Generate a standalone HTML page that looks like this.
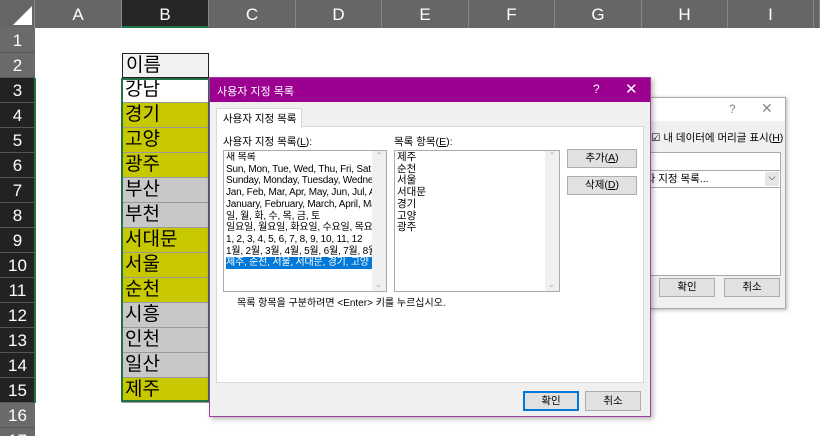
<!DOCTYPE html>
<html><head><meta charset="utf-8"><style>
*{margin:0;padding:0;box-sizing:border-box}
html,body{width:820px;height:436px;overflow:hidden}
body{background:#fff;position:relative;font-family:"Liberation Sans","Noto Sans CJK KR",sans-serif}
.a{position:absolute}
.ch{position:absolute;top:0;height:28px;background:#666;color:#fff;font-size:17px;text-align:center;line-height:30px;border-right:1px solid #888}
.rh{position:absolute;left:0;width:35px;height:25px;color:#fff;font-size:17px;text-align:center;line-height:25px;border-bottom:1px solid #555}
.c{position:absolute;left:122px;width:87px;height:25px;font-size:19px;line-height:24px;padding-left:3px;border-bottom:1px solid #9a9a9a;color:#000}
.y{background:#c8c800}.g{background:#c8c8c8}
.s{font-size:10.5px;color:#000;line-height:12.3px;white-space:nowrap}
.btn{position:absolute;background:#e1e1e1;border:1px solid #adadad;font-size:10.5px;text-align:center}
</style></head><body>
<div class="ch" style="left:0;width:35px;background:#666"></div>
<svg class="a" style="left:12px;top:6px" width="22" height="20"><polygon points="20,0 20,19 1,19" fill="#fff"/></svg>
<div class="ch" style="left:35px;width:87px">A</div>
<div class="ch" style="left:122px;width:87px;background:#262626;border-bottom:2px solid #217346">B</div>
<div class="ch" style="left:209px;width:87px">C</div>
<div class="ch" style="left:296px;width:86px">D</div>
<div class="ch" style="left:382px;width:87px">E</div>
<div class="ch" style="left:469px;width:86px">F</div>
<div class="ch" style="left:555px;width:87px">G</div>
<div class="ch" style="left:642px;width:86px">H</div>
<div class="ch" style="left:728px;width:86px">I</div>
<div class="ch" style="left:814px;width:6px"></div>
<div class="rh" style="top:28px;background:#6a6a6a">1</div>
<div class="rh" style="top:53px;background:#6a6a6a">2</div>
<div class="rh" style="top:78px;background:#222">3</div>
<div class="rh" style="top:103px;background:#222">4</div>
<div class="rh" style="top:128px;background:#222">5</div>
<div class="rh" style="top:153px;background:#222">6</div>
<div class="rh" style="top:178px;background:#222">7</div>
<div class="rh" style="top:203px;background:#222">8</div>
<div class="rh" style="top:228px;background:#222">9</div>
<div class="rh" style="top:253px;background:#222">10</div>
<div class="rh" style="top:278px;background:#222">11</div>
<div class="rh" style="top:303px;background:#222">12</div>
<div class="rh" style="top:328px;background:#222">13</div>
<div class="rh" style="top:353px;background:#222">14</div>
<div class="rh" style="top:378px;background:#222">15</div>
<div class="rh" style="top:403px;background:#6a6a6a">16</div>
<div class="rh" style="top:428px;background:#6a6a6a">17</div>
<div class="a" style="left:34px;top:78px;width:2px;height:325px;background:#217346"></div>
<div class="c" style="top:53px;background:#f2f2f2;border:1px solid #222">이름</div>
<div class="c" style="top:78px;background:#fff">강남</div>
<div class="c y" style="top:103px">경기</div>
<div class="c y" style="top:128px">고양</div>
<div class="c y" style="top:153px">광주</div>
<div class="c g" style="top:178px">부산</div>
<div class="c g" style="top:203px">부천</div>
<div class="c y" style="top:228px">서대문</div>
<div class="c y" style="top:253px">서울</div>
<div class="c y" style="top:278px">순천</div>
<div class="c g" style="top:303px">시흥</div>
<div class="c g" style="top:328px">인천</div>
<div class="c g" style="top:353px">일산</div>
<div class="c y" style="top:378px">제주</div>
<div class="a" style="left:121px;top:78px;width:89px;height:324px;border:2px solid #217346"></div>

<!-- background dialog -->
<div class="a" style="left:640px;top:97px;width:146px;height:212px;background:#f0f0f0;border:1px solid #aaa;box-shadow:1px 1px 4px rgba(0,0,0,.3)">
<div class="a" style="left:0;top:0;width:144px;height:23px;background:#fff;color:#888;font-size:12px"><span class="a" style="left:88px;top:4px">?</span><span class="a" style="left:120px;top:2px;font-size:14px">✕</span></div>
<div class="a s" style="left:10px;top:34px">☑ 내 데이터에 머리글 표시(<u>H</u>)</div>
<div class="a" style="left:0;top:54px;width:140px;height:124px;background:#fff;border:1px solid #aaa"></div>
<div class="a" style="left:0;top:72px;width:140px;height:18px;border:1px solid #aaa;background:#fff"><span class="a s" style="left:-6px;top:2px">용자 지정 목록...</span><span class="a" style="right:1px;top:1px;width:14px;height:14px;background:#e5e5e5;font-size:9px;text-align:center">⌵</span></div>
<div class="btn" style="left:18px;top:180px;width:56px;height:19px;line-height:17px">확인</div>
<div class="btn" style="left:83px;top:180px;width:56px;height:19px;line-height:17px">취소</div>
</div>

<!-- main dialog -->
<div class="a" style="left:209px;top:77px;width:442px;height:340px;background:#f0f0f0;border:1px solid #a040a0;box-shadow:2px 2px 5px rgba(0,0,0,.3)">
<div class="a" style="left:0;top:0;width:440px;height:24px;background:#9b0090;color:#fff;font-size:11px"><span class="a" style="left:7px;top:5px">사용자 지정 목록</span><span class="a" style="left:383px;top:4px;font-size:12px">?</span><span class="a" style="left:415px;top:2px;font-size:15px">✕</span></div>
<div class="a" style="left:6px;top:48px;width:428px;height:257px;background:#fff;border:1px solid #d9d9d9"></div>
<div class="a s" style="left:6px;top:30px;width:86px;height:20px;background:#fff;border:1px solid #d9d9d9;border-bottom:none;padding:4px 0 0 6px">사용자 지정 목록</div>
<div class="a s" style="left:13px;top:58px">사용자 지정 목록(<u>L</u>):</div>
<div class="a s" style="left:184px;top:58px">목록 항목(<u>E</u>):</div>
<div class="a" style="left:13px;top:72px;width:164px;height:142px;border:1px solid #aaa;background:#fff;overflow:hidden">
<div class="a s" style="left:2px;top:1px;width:146px;overflow:hidden;line-height:11.7px;font-size:10px;letter-spacing:-0.2px">새 목록<br>Sun, Mon, Tue, Wed, Thu, Fri, Sat<br>Sunday, Monday, Tuesday, Wednesday<br>Jan, Feb, Mar, Apr, May, Jun, Jul, Aug<br>January, February, March, April, May<br>일, 월, 화, 수, 목, 금, 토<br>일요일, 월요일, 화요일, 수요일, 목요일<br>1, 2, 3, 4, 5, 6, 7, 8, 9, 10, 11, 12<br>1월, 2월, 3월, 4월, 5월, 6월, 7월, 8월<br><span style="background:#0078d7;color:#fff;display:inline-block;width:146px">제주, 순천, 서울, 서대문, 경기, 고양</span></div>
<div class="a" style="right:0;top:0;width:14px;height:140px;background:#f0f0f0;color:#aaa;font-size:8px;text-align:center">⌃<div class="a" style="left:3px;bottom:2px">⌄</div></div>
</div>
<div class="a" style="left:184px;top:72px;width:166px;height:142px;border:1px solid #aaa;background:#fff">
<div class="a s" style="left:2px;top:1px;line-height:11.7px">제주<br>순천<br>서울<br>서대문<br>경기<br>고양<br>광주</div>
<div class="a" style="right:0;top:0;width:14px;height:140px;background:#f0f0f0;color:#aaa;font-size:8px;text-align:center">⌃<div class="a" style="left:3px;bottom:2px">⌄</div></div>
</div>
<div class="btn" style="left:357px;top:71px;width:70px;height:19px;line-height:17px">추가(<u>A</u>)</div>
<div class="btn" style="left:357px;top:98px;width:70px;height:19px;line-height:17px">삭제(<u>D</u>)</div>
<div class="a s" style="left:27px;top:220px;font-size:10px">목록 항목을 구분하려면 &lt;Enter&gt; 키를 누르십시오.</div>
<div class="btn" style="left:313px;top:313px;width:56px;height:20px;line-height:17px;border:2px solid #0078d7">확인</div>
<div class="btn" style="left:375px;top:313px;width:56px;height:20px;line-height:18px">취소</div>
</div>
</body></html>
